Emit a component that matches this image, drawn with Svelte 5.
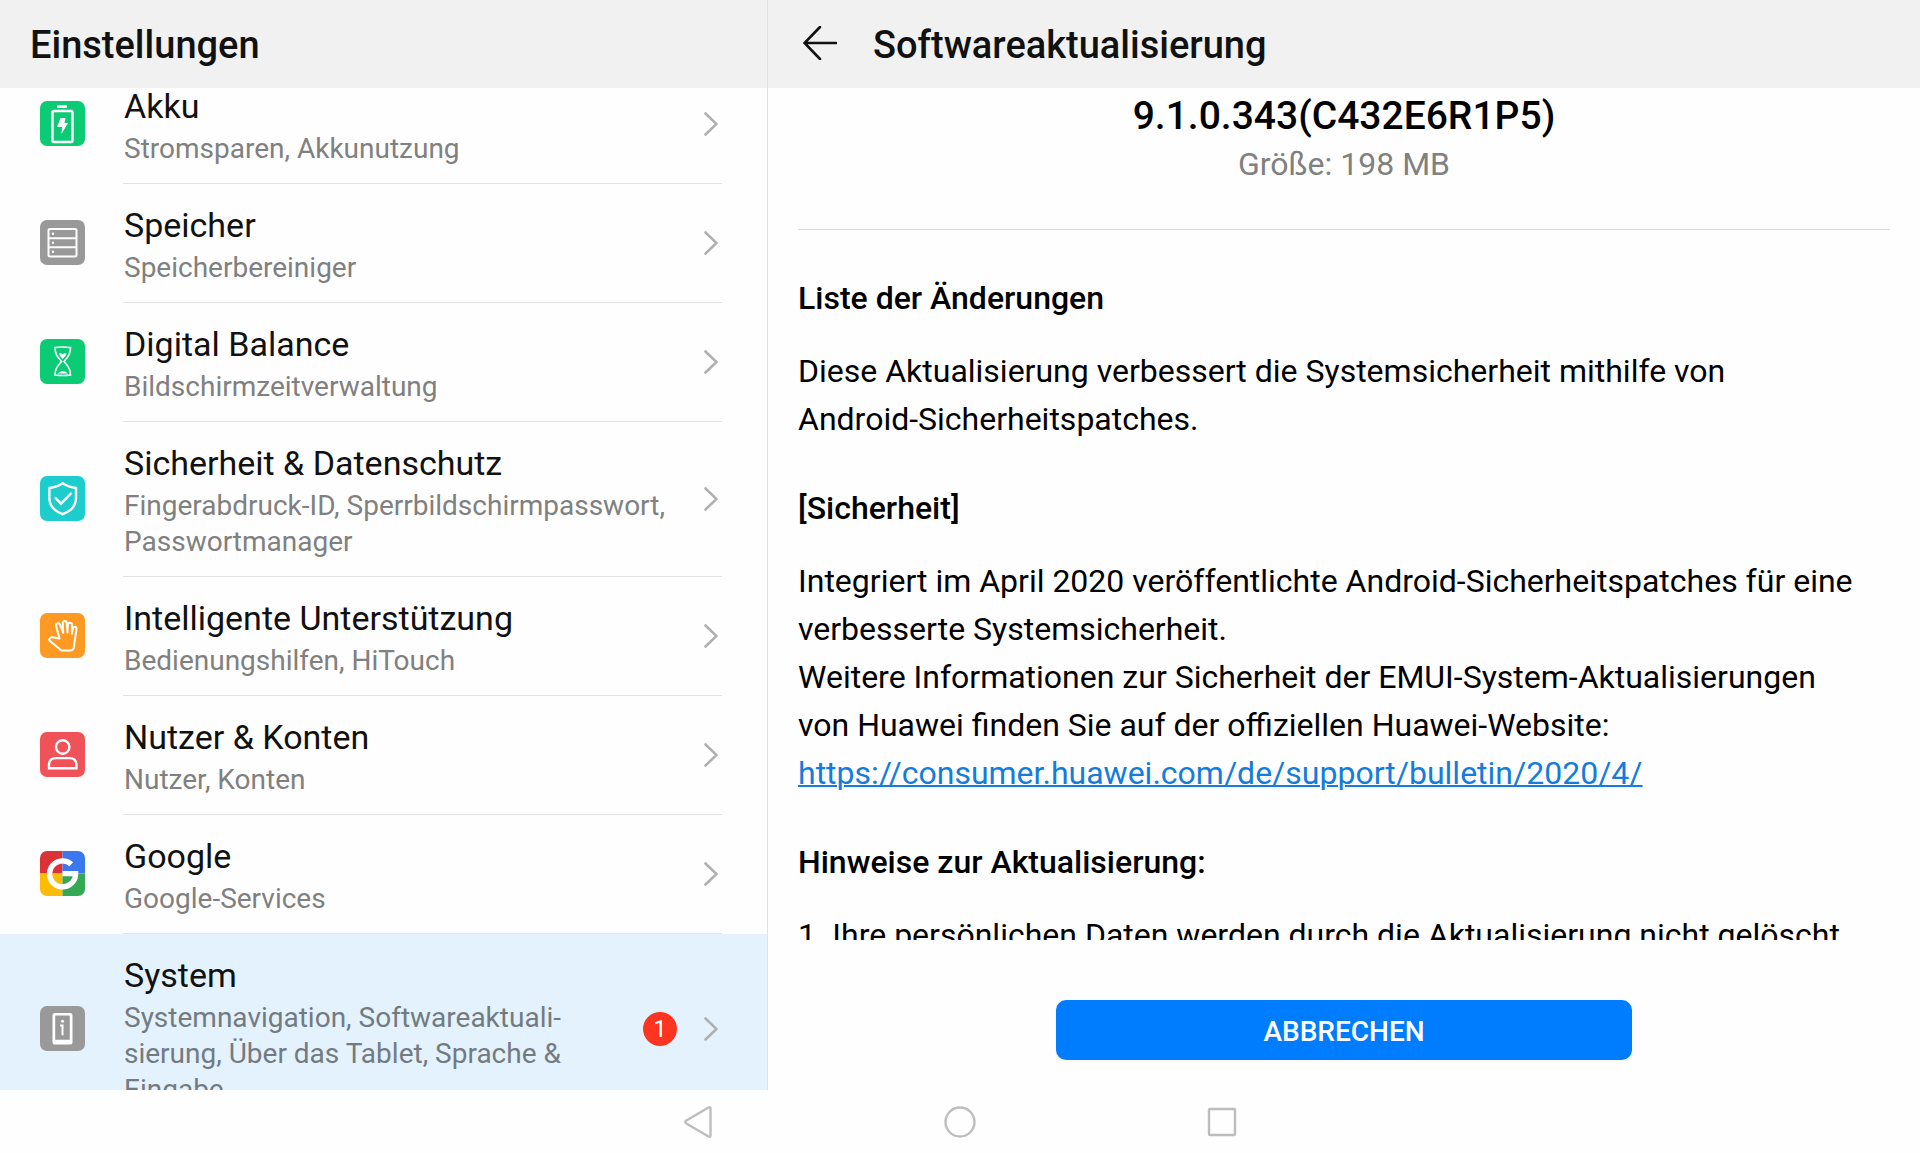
<script>
  const entries = [
    { id: 'battery', title: 'Akku', sub: 'Stromsparen, Akkunutzung' },
    { id: 'storage', title: 'Speicher', sub: 'Speicherbereiniger' },
    { id: 'balance', title: 'Digital Balance', sub: 'Bildschirmzeitverwaltung' },
    { id: 'security', title: 'Sicherheit & Datenschutz', sub: 'Fingerabdruck-ID, Sperrbildschirmpasswort, Passwortmanager' },
    { id: 'assist', title: 'Intelligente Unterstützung', sub: 'Bedienungshilfen, HiTouch' },
    { id: 'users', title: 'Nutzer & Konten', sub: 'Nutzer, Konten' },
    { id: 'google', title: 'Google', sub: 'Google-Services' },
    { id: 'system', title: 'System', sub: 'Systemnavigation, Softwareaktuali\u00adsierung, Über das Tablet, Sprache & Eingabe', badge: 1, active: true }
  ];
</script>

<div class="screen">
  <aside class="settings">
    <header class="bar"><h1>Einstellungen</h1></header>
    <nav class="viewport" aria-label="Einstellungen">
      <ul class="list">
        {#each entries as e (e.id)}
          <li>
            <a class="row" class:active={e.active} href={'#' + e.id}>
              <svg class="icon {e.id}" viewBox="0 0 45 45" aria-hidden="true">
                {#if e.id === 'battery'}
                  <rect x="17" y="4" width="10" height="3" rx="1" class="solid" />
                  <rect x="12.5" y="10" width="20" height="31" rx="1.5" />
                  <path class="solid" d="M20.5 17h5l-1 5h3.500L21.500 33l0.500-7h-5z" />
                {:else if e.id === 'storage'}
                  <rect x="8.500" y="9" width="28" height="27.500" rx="1.500" stroke-width="2" />
                  <path d="M9 18.200h27M9 27.200h27" />
                  <circle class="solid" cx="13" cy="13.800" r="1.200" /><circle class="solid" cx="13" cy="22.700" r="1.200" /><circle class="solid" cx="13" cy="31.700" r="1.200" />
                {:else if e.id === 'balance'}
                  <path class="thin" d="M15 8.500q7.800-1 15.500 0c0 6-2 9-6.500 14 4.500 5 6.500 8 6.500 13.500q-7.800 1-15.500 0c0-5.500 2-8.500 6.500-13.500-4.500-5-6.500-8-6.500-14z" />
                  <path class="solid" d="M19 14.500q2-1 3.700 0.800 1.700-1.800 3.800-0.800-0.700 3-3.800 5.500-3-2.500-3.700-5.500zM17.500 34.500q5.200-5 10.500 0z" />
                {:else if e.id === 'security'}
                  <path d="M22.700 7.300c4 2.700 8.300 4.200 13.300 4.700v10c0 7.500-4.800 13-13.300 16.200C14.200 35 9.400 29.500 9.400 22V12c5-0.500 9.300-2 13.300-4.700z" />
                  <path d="M15.500 22l5.500 5.700 10-10.200" />
                {:else if e.id === 'assist'}
                  <path stroke-linejoin="round" d="M21.500 37.500h9q2.700 0 3.300-3L36.500 16c0.200-2.700-3.300-3-3.700-0.500l-0.900 5.300L32 12c0-3-4-3-4.200 0l-0.300 7.500L26.700 10c-0.300-2.700-4-2.500-3.900 0.300l0.400 9.700L20 11.700c-1-2.500-4.600-1.500-3.900 1.300L19.500 25.500 12.500 24.200c-3-0.300-4.300 2.600-2 4.200z" />
                {:else if e.id === 'users'}
                  <circle cx="22.700" cy="15" r="6.700" />
                  <path d="M9 36.300v-3.500q0-6.700 7-6.700h13.400q7 0 7 6.700v3.500z" />
                {:else if e.id === 'google'}
                  <path fill="#db3236" stroke="none" d="M0 0h22.500v22.500H0z" /><path fill="#3b78f0" stroke="none" d="M22.500 0H45v22.500H22.500z" />
                  <path fill="#fbbc05" stroke="none" d="M0 22.500h22.500V45H0z" /><path fill="#34a853" stroke="none" d="M22.500 22.500H45V45H22.500z" />
                  <path class="thick" d="M31.300 13.200A13 13 0 1 0 35.600 22.600H22.500" />
                {:else}
                  <path class="solid" fill-rule="evenodd" d="M15 7h15q2.500 0 2.500 2.500v26.500q0 2.500-2.500 2.500H15q-2.500 0-2.500-2.500V9.500Q12.500 7 15 7zM15.200 10.300v23.500h14.600V10.300q0-0.800-0.800-0.800H16q-0.800 0-0.800 0.800z" />
                  <circle class="solid" cx="22.500" cy="15.300" r="1.500" />
                  <path d="M21 19.500h1.500v9" />
                {/if}
              </svg>
              <span class="inner">
                <span class="text">
                  <span class="title">{e.title}</span>
                  <span class="sub">{e.sub}</span>
                </span>
                {#if e.badge}<span class="badge">{e.badge}</span>{/if}
                <svg class="chevron" viewBox="0 0 14 24" aria-hidden="true"><path d="M1.500 1.500L12.500 12l-11 10.500" /></svg>
              </span>
            </a>
          </li>
        {/each}
      </ul>
    </nav>
  </aside>

  <main class="update">
    <header class="bar">
      <button class="back" aria-label="Zurück">
        <svg viewBox="0 0 34 34" aria-hidden="true"><path d="M17 1L1.500 17 17 33M1.500 17H33" /></svg>
      </button>
      <h1>Softwareaktualisierung</h1>
    </header>
    <section class="notes">
      <div class="version">
        <h2>9.1.0.343(C432E6R1P5)</h2>
        <p>Größe: 198 MB</p>
      </div>
      <h3>Liste der Änderungen</h3>
      <p>Diese Aktualisierung verbessert die Systemsicherheit mithilfe von <span class="word">Android-Sicherheitspatches.</span></p>
      <h3>[Sicherheit]</h3>
      <p>
        Integriert im April 2020 veröffentlichte Android-Sicherheitspatches für eine verbesserte Systemsicherheit.<br />
        Weitere Informationen zur Sicherheit der EMUI-System-Aktualisierungen <span class="word">von Huawei</span> finden Sie auf der offiziellen Huawei-Website:<br />
        <a href="https://consumer.huawei.com/de/support/bulletin/2020/4/">https://consumer.huawei.com/de/support/bulletin/2020/4/</a>
      </p>
      <h3>Hinweise zur Aktualisierung:</h3>
      <p>1. Ihre persönlichen Daten werden durch die Aktualisierung nicht gelöscht.</p>
    </section>
    <footer class="actions"><button class="cancel">ABBRECHEN</button></footer>
  </main>

  <footer class="navbar">
    <button aria-label="Zurück"><svg viewBox="0 0 34 34" aria-hidden="true"><path d="M27.500 2.500q2-1 2 1v27q0 2-2 1L5 18.200q-1.500-1.200 0-2.400z" /></svg></button>
    <button aria-label="Startbildschirm"><svg viewBox="0 0 34 34" aria-hidden="true"><circle cx="17" cy="17" r="14.500" /></svg></button>
    <button aria-label="Letzte Apps"><svg viewBox="0 0 34 34" aria-hidden="true"><rect x="4" y="4" width="26" height="26" rx="1" /></svg></button>
  </footer>
</div>

<style>
  :global(body) { background: #fefefe; }
  .screen {
    display: grid;
    grid-template: minmax(0, 1fr) 63px / 2fr 3fr;
    height: 100vh;
    overflow: hidden;
    font-family: Roboto, "Liberation Sans", sans-serif;
    color: #111;
    background: #fefefe;
  }
  h1, h2, h3, p, ul { margin: 0; padding: 0; font-weight: 400; }
  button { border: 0; padding: 0; background: none; font: inherit; cursor: pointer; }
  svg { display: block; fill: none; stroke-linecap: round; }
  .settings, .update { display: flex; flex-direction: column; min-width: 0; min-height: 0; }
  .settings { border-right: 1px solid #e2e2e2; box-sizing: border-box; }
  .bar {
    display: flex;
    align-items: center;
    flex: none;
    height: 88px;
    padding: 0 30px;
    background: #f1f1f1;
  }
  h1 { padding-top: 2px; font-size: 38px; line-height: 48px; font-weight: 500; }

  .viewport { flex: 1; min-height: 0; overflow: hidden; }
  .list { list-style: none; margin-top: -23px; }
  .row {
    display: flex;
    align-items: center;
    padding: 0 45px 0 40px;
    color: inherit;
    text-decoration: none;
  }
  .active { background: #e4f2fd; }
  .icon { flex: none; width: 45px; height: 45px; margin: 0 38px 2px 0; border-radius: 7px; stroke: #fff; stroke-width: 2; }
  .icon .solid { fill: #fff; stroke: none; }
  .thin { stroke-width: 1.6; }
  .thick { stroke-width: 5.4; }
  .battery, .security, .users { stroke-width: 2.4; }
  .google { stroke-linecap: butt; }
  .battery, .balance { background: #0bcb75; }
  .storage, .system { background: #999; }
  .security { background: #1dcccc; }
  .assist { background: #fe9a23; }
  .users { background: #f0525a; }
  .inner {
    display: flex;
    align-items: center;
    flex: 1;
    min-width: 0;
    padding: 17px 4px 16px 1px;
    border-bottom: 1px solid #e4e4e4;
  }
  .text { flex: 1; min-width: 0; }
  .title, .sub { display: block; }
  .title { font-size: 34px; line-height: 49px; }
  .sub { font-size: 28px; line-height: 36px; color: #808080; hyphens: manual; }
  .active .sub { color: #737b82; }
  .badge {
    width: 34px;
    margin: 0 0 2px 16px;
    border-radius: 50%;
    background: #fd3420;
    color: #fff;
    font-size: 24px;
    line-height: 34px;
    text-align: center;
  }
  .chevron { flex: none; width: 14px; height: 24px; margin: 0 0 2px 27px; stroke: #b0b0b0; stroke-width: 2.6; }

  .back { margin: 0 36px 2px 5px; }
  .back svg { width: 34px; height: 34px; stroke: #111; stroke-width: 2.6; }
  .notes {
    flex: 1;
    min-height: 0;
    overflow: hidden;
    padding: 0 30px;
    color: #000;
    font-size: 32px;
    line-height: 48px;
  }
  .notes h3 { margin-top: 41px; font-size: 32px; font-weight: 500; }
  .notes > p { margin-top: 25px; }
  .word { white-space: nowrap; }
  .version { padding: 4px 0 41px; margin-bottom: 44px; border-bottom: 1px solid #dcdcdc; text-align: center; }
  .version h2 { font-size: 39px; font-weight: 500; }
  .version p { color: #808080; }
  .notes a { color: #147cdc; text-decoration-thickness: 2px; }
  .actions { display: flex; flex: none; justify-content: center; padding: 60px 0 30px; }
  .cancel {
    width: 50%;
    height: 60px;
    padding-top: 2px;
    border-radius: 10px;
    background: #007dff;
    color: #fff;
    font-size: 28px;
    font-weight: 500;
  }
  .navbar { grid-column: 1 / -1; display: flex; align-items: center; justify-content: center; gap: 228px; }
  .navbar svg { width: 34px; height: 34px; stroke: #bdbdbd; stroke-width: 2.4; }
</style>
